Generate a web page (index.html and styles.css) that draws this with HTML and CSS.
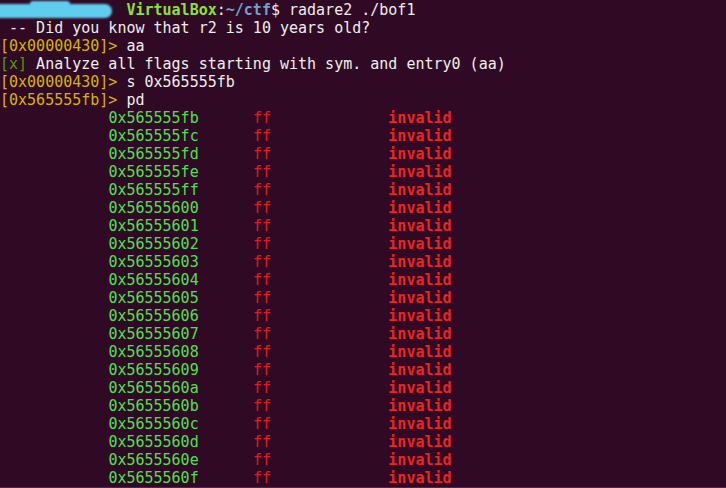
FILE: index.html
```html
<!DOCTYPE html>
<html>
<head>
<meta charset="utf-8">
<link rel="stylesheet" href="styles.css">
</head>
<body>
<div class="term">
<div class="line"><span class="redact"><span class="blob"></span><span class="blob2"></span></span><span class="host">VirtualBox</span>:<span class="path">~/ctf</span>$ radare2 ./bof1</div>
<div class="line"> -- Did you know that r2 is 10 years old?</div>
<div class="line"><span class="prompt">[0x00000430]&gt;</span> aa</div>
<div class="line"><span class="ok">[x]</span> Analyze all flags starting with sym. and entry0 (aa)</div>
<div class="line"><span class="prompt">[0x00000430]&gt;</span> s 0x565555fb</div>
<div class="line"><span class="prompt">[0x565555fb]&gt;</span> pd</div>
<div class="line">            <span class="addr">0x565555fb</span>      <span class="hex">ff</span>             <span class="op">invalid</span></div>
<div class="line">            <span class="addr">0x565555fc</span>      <span class="hex">ff</span>             <span class="op">invalid</span></div>
<div class="line">            <span class="addr">0x565555fd</span>      <span class="hex">ff</span>             <span class="op">invalid</span></div>
<div class="line">            <span class="addr">0x565555fe</span>      <span class="hex">ff</span>             <span class="op">invalid</span></div>
<div class="line">            <span class="addr">0x565555ff</span>      <span class="hex">ff</span>             <span class="op">invalid</span></div>
<div class="line">            <span class="addr">0x56555600</span>      <span class="hex">ff</span>             <span class="op">invalid</span></div>
<div class="line">            <span class="addr">0x56555601</span>      <span class="hex">ff</span>             <span class="op">invalid</span></div>
<div class="line">            <span class="addr">0x56555602</span>      <span class="hex">ff</span>             <span class="op">invalid</span></div>
<div class="line">            <span class="addr">0x56555603</span>      <span class="hex">ff</span>             <span class="op">invalid</span></div>
<div class="line">            <span class="addr">0x56555604</span>      <span class="hex">ff</span>             <span class="op">invalid</span></div>
<div class="line">            <span class="addr">0x56555605</span>      <span class="hex">ff</span>             <span class="op">invalid</span></div>
<div class="line">            <span class="addr">0x56555606</span>      <span class="hex">ff</span>             <span class="op">invalid</span></div>
<div class="line">            <span class="addr">0x56555607</span>      <span class="hex">ff</span>             <span class="op">invalid</span></div>
<div class="line">            <span class="addr">0x56555608</span>      <span class="hex">ff</span>             <span class="op">invalid</span></div>
<div class="line">            <span class="addr">0x56555609</span>      <span class="hex">ff</span>             <span class="op">invalid</span></div>
<div class="line">            <span class="addr">0x5655560a</span>      <span class="hex">ff</span>             <span class="op">invalid</span></div>
<div class="line">            <span class="addr">0x5655560b</span>      <span class="hex">ff</span>             <span class="op">invalid</span></div>
<div class="line">            <span class="addr">0x5655560c</span>      <span class="hex">ff</span>             <span class="op">invalid</span></div>
<div class="line">            <span class="addr">0x5655560d</span>      <span class="hex">ff</span>             <span class="op">invalid</span></div>
<div class="line">            <span class="addr">0x5655560e</span>      <span class="hex">ff</span>             <span class="op">invalid</span></div>
<div class="line">            <span class="addr">0x5655560f</span>      <span class="hex">ff</span>             <span class="op">invalid</span></div>
</div>
</body>
</html>
```

FILE: styles.css
```css
html, body {
  margin: 0;
  padding: 0;
  background: #300a24;
  overflow: hidden;
}
.term {
  width: 726px;
  height: 488px;
  border-bottom: 1px solid #6b1a3c;
  padding-top: 1px;
  box-sizing: border-box;
  font-family: "DejaVu Sans Mono", "Liberation Mono", monospace;
  font-size: 15px;
  color: #eeeeec;
}
.line {
  white-space: pre;
  height: 18px;
  line-height: 18px;
}
.redact {
  display: inline-block;
  position: relative;
  width: 14ch;
  height: 18px;
  vertical-align: top;
}
.blob {
  position: absolute;
  left: -6px;
  top: 3px;
  width: 118px;
  height: 14px;
  background: #5fcdee;
  border-radius: 3px 8px 8px 3px;
  filter: blur(1.2px);
}
.blob2 {
  position: absolute;
  left: 30px;
  top: 0px;
  width: 40px;
  height: 6px;
  background: #5fcdee;
  border-radius: 4px;
  filter: blur(1.2px);
}
.host { color: #8ae234; font-weight: bold; }
.path { color: #729fcf; font-weight: bold; }
.prompt { color: #d6b300; }
.ok { color: #4e9a06; }
.addr { color: #4fe04f; }
.hex { color: #e01c1c; }
.op { color: #ef2222; font-weight: bold; }
```
